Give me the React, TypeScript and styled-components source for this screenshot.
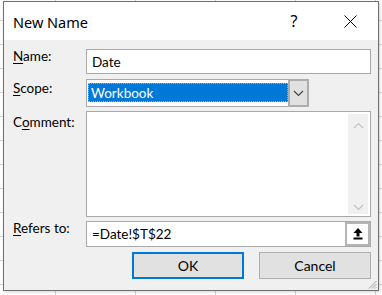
import styled, { createGlobalStyle } from "styled-components"

const GlobalStyle = createGlobalStyle`
  html, body {
    margin: 0;
    padding: 0;
  }
  body {
    width: 382px;
    height: 295px;
    overflow: hidden;
    background-color: #fff;
    background-image:
      linear-gradient(to right, #d4d4d4 1px, transparent 1px),
      linear-gradient(to bottom, #d4d4d4 1px, transparent 1px);
    background-size: 80px 24px, 80px 24px;
    background-position: 55px 0, 0 20px;
    font-family: Lato, "Noto Sans", sans-serif;
    font-size: 13.5px;
    color: #000;
  }
`

const Page = styled.div`
  padding: 1px 0 0 3px;
`

const Dialog = styled.div`
  position: relative;
  width: 376px;
  height: 290px;
  box-sizing: border-box;
  border: 1px solid #6f6f6f;
  display: flex;
  flex-direction: column;
  box-shadow: 1px 1px 3px rgba(0, 0, 0, 0.18);
`

const TitleBar = styled.div`
  height: 38px;
  flex-shrink: 0;
  background: #fff;
  display: flex;
  align-items: center;
  padding-left: 9px;
`

const Title = styled.div`
  flex: 1;
  font-family: "Noto Sans", sans-serif;
  font-size: 14.5px;
  line-height: 20px;
  margin-top: 1px;
`

const CaptionButton = styled.div`
  width: 56px;
  height: 100%;
  display: flex;
  align-items: center;
  justify-content: center;
  font-family: "Noto Sans", sans-serif;
  font-size: 16px;
`

const Body = styled.div`
  flex: 1;
  background: #f0f0f0;
  padding: 9px 7px 0 9px;
  display: flex;
  flex-direction: column;
`

const Row = styled.div<{ $gap: number }>`
  display: flex;
  align-items: flex-start;
  margin-bottom: ${(p) => p.$gap}px;
`

const Label = styled.div<{ $shift: number }>`
  width: 73px;
  flex-shrink: 0;
  line-height: 20px;
  margin-top: ${(p) => p.$shift}px;

  u {
    text-decoration-thickness: 1px;
    text-underline-offset: 2px;
  }
`

const TextField = styled.div<{ $h: number }>`
  flex: 1;
  height: ${(p) => p.$h}px;
  box-sizing: border-box;
  border: 1px solid #a9a9a9;
  background: #fff;
  display: flex;
  align-items: center;
  padding-left: 5px;
  line-height: 20px;
`

const FieldText = styled.span`
  flex: 1;
`

const Combo = styled.div`
  width: 223px;
  height: 28px;
  display: flex;
`

const ComboValue = styled.div`
  flex: 1;
  box-sizing: border-box;
  border: 1px solid #a9a9a9;
  border-right: none;
  background: #fff;
  padding: 3px 0 4px 1px;
`

const Selection = styled.div`
  height: 100%;
  box-sizing: border-box;
  background: #0078d7;
  color: #fff;
  border: 1px dotted #f2a24a;
  padding-left: 2px;
  display: flex;
  align-items: center;
  line-height: 18px;
`

const DropButton = styled.div`
  width: 21px;
  box-sizing: border-box;
  border: 2px solid #adadad;
  background: #e1e1e1;
  display: flex;
  align-items: center;
  justify-content: center;
`

const TextArea = styled.div`
  flex: 1;
  height: 106px;
  box-sizing: border-box;
  border: 1px solid #a9a9a9;
  background: #fff;
  padding: 2px;
  display: flex;
  justify-content: flex-end;
`

const ScrollBar = styled.div`
  width: 20px;
  background: #f0f0f0;
  display: flex;
  flex-direction: column;
  justify-content: space-between;
  align-items: center;
  padding: 8px 0 3px;
`

const PickButton = styled.div`
  width: 25px;
  align-self: stretch;
  box-sizing: border-box;
  border: 2px solid #b4b4b4;
  background: #fff;
  display: flex;
  align-items: center;
  justify-content: center;
`

const Buttons = styled.div`
  display: flex;
  justify-content: flex-end;
  gap: 15px;
`

const Button = styled.div<{ $default?: boolean }>`
  width: 112px;
  height: 27px;
  box-sizing: border-box;
  border: ${(p) => (p.$default ? "2px solid #0078d7" : "1px solid #adadad")};
  background: #e1e1e1;
  display: flex;
  align-items: center;
  justify-content: center;
  line-height: 20px;
  font-size: 14px;
`

const Grip = styled.svg`
  position: absolute;
  right: 1px;
  bottom: 1px;
`

const Chevron = ({ up, color }: { up?: boolean; color: string }) => (
  <svg width="11" height="7" viewBox="0 0 11 7">
    <path
      d={up ? "M1 6 L5.5 1.5 L10 6" : "M1 1 L5.5 5.5 L10 1"}
      fill="none"
      stroke={color}
      strokeWidth="1.2"
    />
  </svg>
)

export default function App() {
  return (
    <>
      <GlobalStyle />
      <Page>
        <Dialog>
          <TitleBar>
            <Title>New Name</Title>
            <CaptionButton>?</CaptionButton>
            <CaptionButton>
              <svg width="13" height="13" viewBox="0 0 13 13">
                <path d="M0.5 0.5 L12.5 12.5 M12.5 0.5 L0.5 12.5" stroke="#000" strokeWidth="1" />
              </svg>
            </CaptionButton>
          </TitleBar>
          <Body>
            <Row $gap={5}>
              <Label $shift={-3}>
                <u>N</u>ame:
              </Label>
              <TextField $h={25}>
                <FieldText>Date</FieldText>
              </TextField>
            </Row>
            <Row $gap={4}>
              <Label $shift={-1}>
                <u>S</u>cope:
              </Label>
              <Combo>
                <ComboValue>
                  <Selection>Workbook</Selection>
                </ComboValue>
                <DropButton>
                  <Chevron color="#404040" />
                </DropButton>
              </Combo>
            </Row>
            <Row $gap={4}>
              <Label $shift={1}>
                C<u>o</u>mment:
              </Label>
              <TextArea>
                <ScrollBar>
                  <Chevron up color="#c2c2c2" />
                  <Chevron color="#c2c2c2" />
                </ScrollBar>
              </TextArea>
            </Row>
            <Row $gap={5}>
              <Label $shift={-3}>
                <u>R</u>efers to:
              </Label>
              <TextField $h={26}>
                <FieldText>=Date!$T$22</FieldText>
                <PickButton>
                  <svg width="10" height="12" viewBox="0 0 10 12">
                    <path d="M5 0 L9.5 5 L6.5 5 L6.5 8.5 L3.5 8.5 L3.5 5 L0.5 5 Z" fill="#000" />
                    <rect x="0.5" y="9.5" width="9" height="2" fill="#000" />
                  </svg>
                </PickButton>
              </TextField>
            </Row>
            <Buttons>
              <Button $default>OK</Button>
              <Button>Cancel</Button>
            </Buttons>
          </Body>
          <Grip width="10" height="10" viewBox="0 0 10 10">
            <path d="M9.5 2 L2 9.5 M9.5 5 L5 9.5 M9.5 8 L8 9.5" stroke="#9a9a9a" strokeWidth="1" />
          </Grip>
        </Dialog>
      </Page>
    </>
  )
}
